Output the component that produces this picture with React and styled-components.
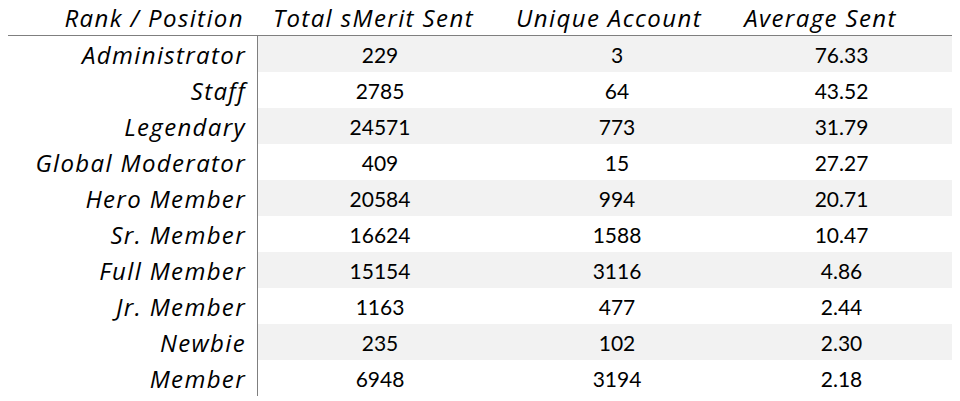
import React from "react";
import styled, { createGlobalStyle } from "styled-components";

const GlobalStyle = createGlobalStyle`
  body {
    margin: 0;
    background: #fff;
    color: #000;
    font-family: Lato, "Open Sans", sans-serif;
  }
`;

const rows = [
  { rank: "Administrator", total: 229, unique: 3, avg: "76.33" },
  { rank: "Staff", total: 2785, unique: 64, avg: "43.52" },
  { rank: "Legendary", total: 24571, unique: 773, avg: "31.79" },
  { rank: "Global Moderator", total: 409, unique: 15, avg: "27.27" },
  { rank: "Hero Member", total: 20584, unique: 994, avg: "20.71" },
  { rank: "Sr. Member", total: 16624, unique: 1588, avg: "10.47" },
  { rank: "Full Member", total: 15154, unique: 3116, avg: "4.86" },
  { rank: "Jr. Member", total: 1163, unique: 477, avg: "2.44" },
  { rank: "Newbie", total: 235, unique: 102, avg: "2.30" },
  { rank: "Member", total: 6948, unique: 3194, avg: "2.18" },
];

const Table = styled.div`
  width: 944px;
  margin-left: 8px;
`;

const HeaderRow = styled.div`
  display: grid;
  grid-template-columns: 251px 244px 230px 219px;
  height: 35px;
  align-items: center;
  border-bottom: 1px solid #7f7f7f;
`;

const HeaderCell = styled.div`
  font-family: "Open Sans", sans-serif;
  font-style: italic;
  font-size: 24px;
  letter-spacing: 1.4px;
  white-space: nowrap;
  text-align: ${(p) => (p.$right ? "right" : "center")};
  padding-right: ${(p) => p.$pad || 0}px;
`;

const Row = styled.div`
  display: grid;
  grid-template-columns: 250px 1fr;
  height: 36px;
`;

const Rank = styled.div`
  font-family: "Open Sans", sans-serif;
  font-style: italic;
  font-size: 24px;
  letter-spacing: 1.35px;
  text-align: right;
  padding: 1px 11px 0 0;
  line-height: 35px;
  white-space: nowrap;
  border-right: 1px solid #7f7f7f;
`;

const Values = styled.div`
  display: grid;
  grid-template-columns: 244px 230px 219px;
  align-items: center;
  background: ${(p) => (p.$shaded ? "#f2f2f2" : "transparent")};
`;

const Num = styled.div`
  font-size: 21px;
  text-align: center;
`;

export default function App() {
  return (
    <>
      <GlobalStyle />
      <Table>
        <HeaderRow>
          <HeaderCell $right $pad={15}>Rank / Position</HeaderCell>
          <HeaderCell $pad={15}>Total sMerit Sent</HeaderCell>
          <HeaderCell $pad={18}>Unique Account</HeaderCell>
          <HeaderCell $pad={44}>Average Sent</HeaderCell>
        </HeaderRow>
        {rows.map((r, i) => (
          <Row key={r.rank}>
            <Rank>{r.rank}</Rank>
            <Values $shaded={i % 2 === 0}>
              <Num>{r.total}</Num>
              <Num>{r.unique}</Num>
              <Num>{r.avg}</Num>
            </Values>
          </Row>
        ))}
      </Table>
    </>
  );
}
